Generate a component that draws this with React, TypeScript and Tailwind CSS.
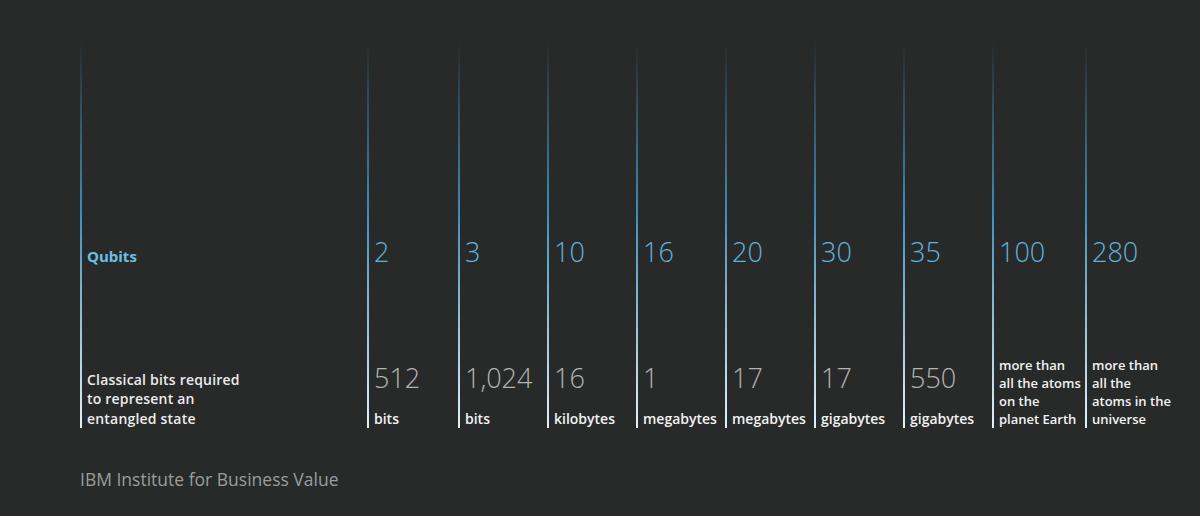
const columns = [
  { qubits: "2", value: "512", unit: ["bits"], w: "w-[91px]" },
  { qubits: "3", value: "1,024", unit: ["bits"], w: "w-[89px]" },
  { qubits: "10", value: "16", unit: ["kilobytes"], w: "w-[89px]" },
  { qubits: "16", value: "1", unit: ["megabytes"], w: "w-[89px]" },
  { qubits: "20", value: "17", unit: ["megabytes"], w: "w-[89px]" },
  { qubits: "30", value: "17", unit: ["gigabytes"], w: "w-[89px]" },
  { qubits: "35", value: "550", unit: ["gigabytes"], w: "w-[89px]" },
  { qubits: "100", value: "", unit: ["more than", "all the atoms", "on the", "planet Earth"], w: "w-[93px]" },
  { qubits: "280", value: "", unit: ["more than", "all the", "atoms in the", "universe"], w: "w-[94px]" },
];

const Line = () => (
  <div className="w-[2px] h-full shrink-0 bg-gradient-to-b from-transparent via-[#3f8fbd] via-45% to-[#e4f1f5]" />
);

export default function App() {
  return (
    <div
      className="w-[1200px] h-[516px] bg-[#282a2a] pt-[42px] pl-[80px]"
      style={{ fontFamily: '"Open Sans", "Noto Sans", sans-serif' }}
    >
      <div className="flex h-[386px]">
        {/* Row labels */}
        <div className="flex w-[287px] h-full">
          <Line />
          <div className="flex flex-col h-full pl-[5px]">
            <div className="pt-[204px] text-[15px] leading-[20px] font-bold text-[#6cc0e6]">Qubits</div>
            <div className="flex-1" />
            <div className="text-[14px] leading-[19.5px] font-semibold tracking-[0.2px] text-[#ececec]">
              Classical bits required
              <br />
              to represent an
              <br />
              entangled state
            </div>
          </div>
        </div>

        {/* Data columns */}
        {columns.map((c) => (
          <div key={c.qubits} className={`flex h-full ${c.w}`}>
            <Line />
            <div className="flex flex-col h-full pl-[5px]">
              <div className="pt-[194px] text-[27px] leading-[32px] font-light text-[#5fb2de]">
                {c.qubits}
              </div>
              <div className="flex-1" />
              {c.value ? (
                <>
                  <div className="text-[27px] leading-[32px] font-light text-[#b3b3b3] mb-[16px]">
                    {c.value}
                  </div>
                  <div className="text-[14px] leading-[18px] font-semibold text-[#f2f2f2] whitespace-nowrap">
                    {c.unit[0]}
                  </div>
                </>
              ) : (
                <div className="text-[13px] leading-[18px] font-semibold text-[#f2f2f2] whitespace-nowrap">
                  {c.unit.map((l) => (
                    <div key={l}>{l}</div>
                  ))}
                </div>
              )}
            </div>
          </div>
        ))}
      </div>

      <div className="mt-[39px] text-[17.5px] leading-[24px] text-[#9c9c9c]">IBM Institute for Business Value</div>
    </div>
  );
}
